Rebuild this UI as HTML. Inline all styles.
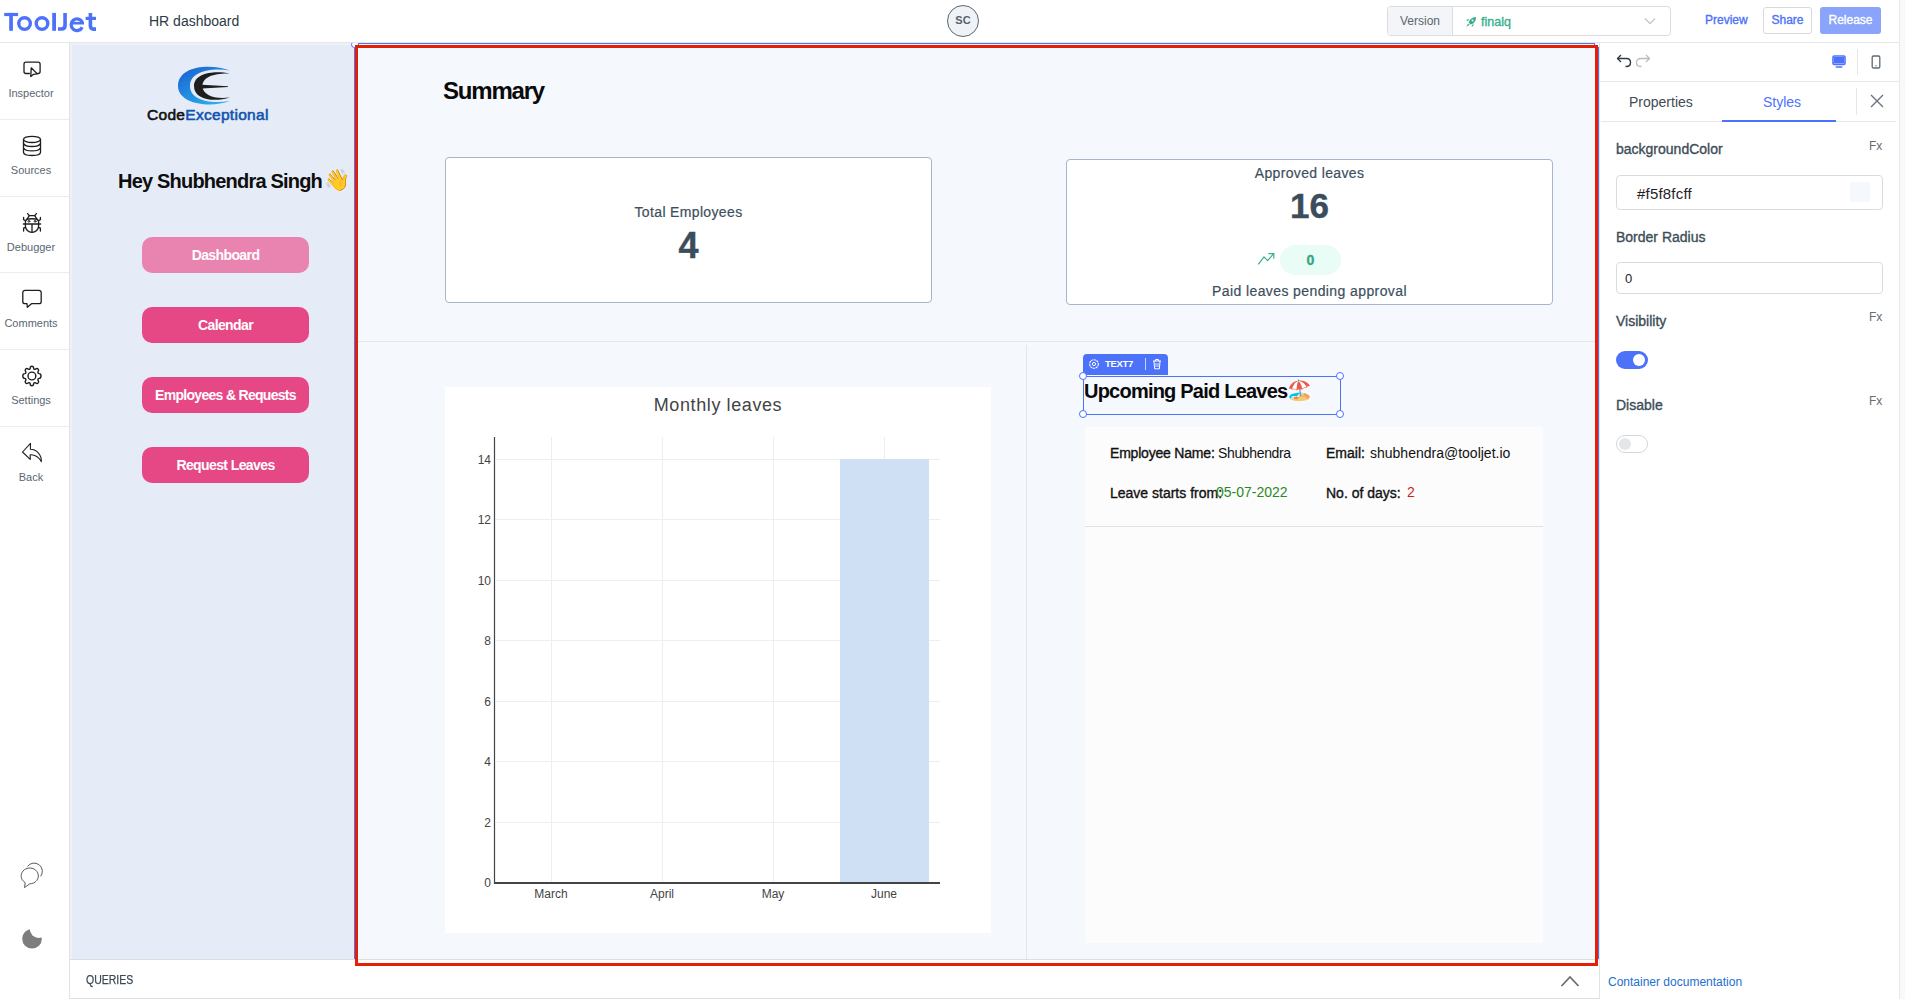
<!DOCTYPE html>
<html><head><meta charset="utf-8">
<style>
*{box-sizing:border-box;margin:0;padding:0}
html,body{width:1905px;height:999px;overflow:hidden;background:#fff;font-family:"Liberation Sans",sans-serif;position:relative}
.a{position:absolute}
.t{position:absolute;white-space:nowrap;line-height:1}
</style></head><body>

<!-- HEADER -->
<div class="a" style="left:0;top:0;width:1905px;height:42px;background:#fff"></div>
<div class="a" style="left:0;top:42px;width:1899px;height:1px;background:#e4e6e8"></div>
<svg class="a" style="left:0;top:5px" width="100" height="32" viewBox="0 5 100 32"><g fill="#4d72fa"><rect x="4.2" y="12.9" width="13.9" height="3.2"/><rect x="9.2" y="12.9" width="3.7" height="17.9"/><rect x="52.2" y="12.9" width="3.8" height="17.9"/><rect x="85.6" y="16.8" width="10.4" height="3.2"/></g><g fill="none" stroke="#4d72fa"><circle cx="24.55" cy="23.55" r="5.8" stroke-width="3.4"/><circle cx="42" cy="23.55" r="5.8" stroke-width="3.4"/><path d="M65.05 12.9 V25.3 Q65.05 29.05 61.3 29.05 H58" stroke-width="3.6"/><path d="M90.4 12.9 V25.8 Q90.4 29.1 93.7 29.1 H96" stroke-width="3.6"/><path d="M82.2 27.2 A5.8 5.8 0 1 1 82.3 22.5" stroke-width="3.3"/></g><rect x="70.5" y="21.9" width="13.5" height="2.6" fill="#4d72fa"/></svg>
<div class="t" style="left:149px;top:14px;font-size:14px;color:#2c3a45">HR dashboard</div>
<div class="a" style="left:947px;top:5px;width:32px;height:32px;border-radius:50%;border:1px solid #5b6770;background:#eff2f6"></div>
<div class="t" style="left:947px;top:15px;width:32px;text-align:center;font-size:11px;font-weight:bold;color:#56626c">SC</div>

<div class="a" style="left:1387px;top:6px;width:284px;height:30px;border:1px solid #dadcdf;border-radius:4px;background:#fff;overflow:hidden">
  <div class="a" style="left:0;top:0;width:65px;height:28px;background:#f3f5f8;border-right:1px solid #dadcdf"></div>
</div>
<div class="t" style="left:1400px;top:15px;font-size:12px;color:#5b6670">Version</div>
<svg class="a" style="left:1460px;top:10px" width="20" height="22" viewBox="1460 10 20 22"><g fill="#34ad88"><path d="M1475.9 16.9 C1474 16.9 1471.5 18 1469.8 19.9 L1468.6 22.6 L1470.6 24.6 L1473.3 23.4 C1475.2 21.7 1476.2 19.2 1475.9 16.9 Z"/><path d="M1468.9 18.8 L1466.8 19.7 L1466.6 21.2 L1468.4 20.6 Z"/><path d="M1473.9 24.1 L1473 26.2 L1471.4 26.5 L1472.3 24.7 Z"/><path d="M1468.3 23.4 L1466.1 26.9 L1469.7 24.8 Z"/></g><circle cx="1472.6" cy="20.5" r="1.05" fill="#fff"/></svg>
<div class="t" style="left:1481px;top:16px;font-size:12.5px;-webkit-text-stroke:0.35px currentColor;color:#36af8b">finalq</div>
<svg class="a" style="left:1644px;top:17px" width="12" height="8" viewBox="0 0 12 8"><path d="M1 1.5 L6 6.5 L11 1.5" fill="none" stroke="#c3c7cb" stroke-width="1.3"/></svg>

<div class="t" style="left:1705px;top:14px;font-size:12px;-webkit-text-stroke:0.35px currentColor;color:#4d72fa">Preview</div>
<div class="a" style="left:1763px;top:7px;width:49px;height:27px;border:1px solid #d6d9dd;border-radius:3px;background:#fff"></div>
<div class="t" style="left:1763px;top:14px;width:49px;text-align:center;font-size:12px;-webkit-text-stroke:0.35px currentColor;color:#4d72fa">Share</div>
<div class="a" style="left:1820px;top:7px;width:61px;height:27px;border-radius:3px;background:#8aa4fb"></div>
<div class="t" style="left:1820px;top:14px;width:61px;text-align:center;font-size:12px;-webkit-text-stroke:0.35px currentColor;color:#fff">Release</div>

<!-- right scroll edge -->
<div class="a" style="left:1899px;top:0;width:1px;height:999px;background:#e8e9eb"></div>
<div class="a" style="left:1900px;top:0;width:5px;height:999px;background:#f9f9f9"></div>

<!-- LEFT SIDEBAR -->
<div class="a" style="left:69px;top:43px;width:1px;height:956px;background:#e1e3e5"></div>
<div class="a" style="left:0;top:119px;width:69px;height:1px;background:#ececee"></div>
<div class="a" style="left:0;top:196px;width:69px;height:1px;background:#ececee"></div>
<div class="a" style="left:0;top:272px;width:69px;height:1px;background:#ececee"></div>
<div class="a" style="left:0;top:349px;width:69px;height:1px;background:#ececee"></div>
<div class="a" style="left:0;top:426px;width:69px;height:1px;background:#ececee"></div>

<svg class="a" style="left:0;top:0" width="70" height="480" viewBox="0 0 70 480"><g fill="none" stroke="#1e1e1e" stroke-width="1.3" stroke-linejoin="round" stroke-linecap="round">
<path d="M29.4 73.5 H26 a2 2 0 0 1 -2 -2 V64.2 a2 2 0 0 1 2 -2 H38.1 a2 2 0 0 1 2 2 V71.5 a2 2 0 0 1 -2 2 H37.6"/>
<path d="M31.2 67.8 L37.3 73.9 L33.6 74.3 L30.8 76.6 Z"/>
<ellipse cx="32" cy="139.4" rx="8.5" ry="3.1"/>
<path d="M23.5 139.4 V152.3 C23.5 154.2 27.3 155.5 32 155.5 C36.7 155.5 40.5 154.2 40.5 152.3 V139.4"/>
<path d="M23.5 143.6 C24.5 145.5 28 146.5 32 146.5 C36 146.5 39.5 145.5 40.5 143.6 M23.5 148 C24.5 149.9 28 150.9 32 150.9 C36 150.9 39.5 149.9 40.5 148"/>
<path d="M27.6 213.6 L29.3 215.6 M36.4 213.6 L34.7 215.6"/>
<path d="M29.3 215.6 H34.7 L38.6 221.5 V226 C38.6 229.5 35.5 232.4 32 232.4 C28.5 232.4 25.4 229.5 25.4 226 V221.5 Z"/>
<path d="M23.4 224 H40.6 M32 224 V232.2 M26.3 219.5 C28 218.5 36 218.5 37.7 219.5"/>
<path d="M25.5 220.8 L23.6 219.6 V217.3 M38.5 220.8 L40.4 219.6 V217.3 M25.5 227.3 L23.6 228.2 V231 M38.5 227.3 L40.4 228.2 V231"/>
<circle cx="28.9" cy="221.3" r="0.9" stroke-width="1"/><circle cx="35.1" cy="221.3" r="0.9" stroke-width="1"/>
<path d="M25 290.3 H39 a2.2 2.2 0 0 1 2.2 2.2 V301.5 a2.2 2.2 0 0 1 -2.2 2.2 H31.5 L27.3 307.3 L27 303.7 H25 a2.2 2.2 0 0 1 -2.2 -2.2 V292.5 a2.2 2.2 0 0 1 2.2 -2.2 Z"/>
<circle cx="31.9" cy="376" r="3.9" stroke-width="1.4"/>
<path d="M31.9 366.2 C33.2 366.2 33.6 366.9 33.6 368.2 C33.6 369 34.5 369.6 35.3 369.3 C36.3 368.5 37.3 368.3 38.1 369 C38.9 369.8 38.8 370.8 38 371.7 C37.6 372.5 38.1 373.5 39.1 373.6 C40.4 373.6 41 374.5 41 376 C41 377.5 40.4 378.4 39.1 378.4 C38.1 378.5 37.6 379.5 38 380.3 C38.8 381.2 38.9 382.2 38.1 383 C37.3 383.7 36.3 383.5 35.3 382.7 C34.5 382.4 33.6 383 33.6 383.8 C33.6 385.1 33.2 385.8 31.9 385.8 C30.6 385.8 30.2 385.1 30.2 383.8 C30.2 383 29.3 382.4 28.5 382.7 C27.5 383.5 26.5 383.7 25.7 383 C24.9 382.2 25 381.2 25.8 380.3 C26.2 379.5 25.7 378.5 24.7 378.4 C23.4 378.4 22.8 377.5 22.8 376 C22.8 374.5 23.4 373.6 24.7 373.6 C25.7 373.5 26.2 372.5 25.8 371.7 C25 370.8 24.9 369.8 25.7 369 C26.5 368.3 27.5 368.5 28.5 369.3 C29.3 369.6 30.2 369 30.2 368.2 C30.2 366.9 30.6 366.2 31.9 366.2 Z" stroke-width="1.4"/>
<path d="M30.5 443.4 L22.5 452 L30.2 459.3 V454.8 C35 454.5 39 457.5 41.4 461.6 C41.6 455 37 449.6 30.4 449.3 Z" stroke-width="1.1"/>
</g></svg>
<div class="t" style="left:0;top:88px;width:62px;text-align:center;font-size:11px;color:#5a6772">Inspector</div>

<div class="t" style="left:0;top:165px;width:62px;text-align:center;font-size:11px;color:#5a6772">Sources</div>

<div class="t" style="left:0;top:242px;width:62px;text-align:center;font-size:11px;color:#5a6772">Debugger</div>

<div class="t" style="left:0;top:318px;width:62px;text-align:center;font-size:11px;color:#5a6772">Comments</div>

<div class="t" style="left:0;top:395px;width:62px;text-align:center;font-size:11px;color:#5a6772">Settings</div>

<div class="t" style="left:0;top:472px;width:62px;text-align:center;font-size:11px;color:#5a6772">Back</div>

<svg class="a" style="left:0;top:855px" width="70" height="40" viewBox="0 855 70 40"><g fill="none" stroke="#4a4a4a" stroke-width="0.9" stroke-linejoin="round"><path d="M29.8 883.8 A8.6 7.9 0 1 0 25.2 882.6 L24.5 887.6 Z"/><path d="M27.5 866.4 A7.9 7.9 0 1 1 40.7 876.3"/></g></svg>
<svg class="a" style="left:0;top:900px" width="70" height="60" viewBox="0 900 70 60"><defs><mask id="mm"><rect x="0" y="900" width="70" height="60" fill="#fff"/><circle cx="38.8" cy="929" r="9" fill="#000"/></mask></defs><circle cx="32" cy="938.8" r="9.8" fill="#7d7d7d" mask="url(#mm)"/></svg>

<!-- APP LEFT SIDEBAR -->
<div class="a" style="left:70px;top:43px;width:284px;height:916px;background:#eef1f6"></div><div class="a" style="left:72px;top:45px;width:282px;height:914px;background:#e5ecf7"></div>

<!-- logo -->
<svg class="a" style="left:170px;top:60px" width="70" height="50" viewBox="170 60 70 50">
<defs><linearGradient id="bg1" x1="0" y1="0" x2="0.8" y2="1"><stop offset="0" stop-color="#1a5fcf"/><stop offset="1" stop-color="#2bb0f2"/></linearGradient></defs>
<path d="M230 70.5 C212 63.5 178 65 178 86 C178 104 210 108.5 230 101 C206 104.5 190 98.5 190 86 C190 72 210 67.5 230 70.5 Z" fill="url(#bg1)"/>
<path d="M230 73.5 C214 70 194 73 194 86 C194 100 214 102.5 230 97.5 C214 99.5 202.5 95 202.5 86 C202.5 77 214 73 230 73.5 Z" fill="#1e1e1e"/>
<path d="M202 84.8 L228 86.2 L228 86.9 L202 88.6 Z" fill="#1e1e1e"/>
</svg>
<div class="t" style="left:147px;top:107px;font-size:15.5px;-webkit-text-stroke:0.6px currentColor;letter-spacing:0.3px;color:#111">Code<span style="color:#1254b0">Exceptional</span></div>

<div class="t" style="left:118px;top:171px;font-size:20px;font-weight:bold;letter-spacing:-0.8px;color:#0e0e0e">Hey Shubhendra Singh</div>
<div class="t" style="left:324px;top:169px;font-size:21px">👋</div>

<div class="a" style="left:142px;top:237px;width:167px;height:36px;border-radius:10px;background:#e984b0"></div>
<div class="t" style="left:142px;top:248px;width:167px;text-align:center;font-size:14px;font-weight:bold;letter-spacing:-0.6px;color:#fff">Dashboard</div>
<div class="a" style="left:142px;top:307px;width:167px;height:36px;border-radius:10px;background:#e64886"></div>
<div class="t" style="left:142px;top:318px;width:167px;text-align:center;font-size:14px;font-weight:bold;letter-spacing:-0.6px;color:#fff">Calendar</div>
<div class="a" style="left:142px;top:377px;width:167px;height:36px;border-radius:10px;background:#e64886"></div>
<div class="t" style="left:142px;top:388px;width:167px;text-align:center;font-size:14px;font-weight:bold;letter-spacing:-0.7px;color:#fff">Employees &amp; Requests</div>
<div class="a" style="left:142px;top:447px;width:167px;height:36px;border-radius:10px;background:#e64886"></div>
<div class="t" style="left:142px;top:458px;width:167px;text-align:center;font-size:14px;font-weight:bold;letter-spacing:-0.6px;color:#fff">Request Leaves</div>

<!-- CANVAS -->
<div class="a" style="left:354px;top:43px;width:1245px;height:916px;background:#f5f8fc"></div>

<!-- QUERIES -->
<div class="a" style="left:70px;top:959px;width:1530px;height:40px;background:#fff;border-top:1px solid #dcdee0;border-bottom:1px solid #dcdee0;border-right:1px solid #dcdee0"></div>
<div class="t" style="left:86px;top:974px;font-size:12.5px;-webkit-text-stroke:0.25px currentColor;color:#3a4a56;transform:scaleX(0.84);transform-origin:0 0">QUERIES</div>
<svg class="a" style="left:1560px;top:974px" width="20" height="14" viewBox="0 0 20 14"><path d="M1.5 12 L10 3 L18.5 12" fill="none" stroke="#6a6e72" stroke-width="1.8"/></svg>

<!-- RIGHT PANEL -->
<div class="a" style="left:1599px;top:43px;width:1px;height:956px;background:#e1e3e5"></div>
<div class="a" style="left:1600px;top:81px;width:299px;height:1px;background:#e6e8ea"></div>

<svg class="a" style="left:1616px;top:54px" width="16" height="14" viewBox="0 0 16 14"><path d="M5 1 L1.5 4.5 L5 8" fill="none" stroke="#2f3a42" stroke-width="1.4" stroke-linejoin="round"/><path d="M1.5 4.5 H10.5 C13 4.5 14.5 6.3 14.5 8.5 C14.5 10.7 13 12.5 10.5 12.5 H9.5" fill="none" stroke="#2f3a42" stroke-width="1.4"/></svg>
<svg class="a" style="left:1635px;top:54px" width="16" height="14" viewBox="0 0 16 14"><path d="M11 1 L14.5 4.5 L11 8" fill="none" stroke="#b9bdc1" stroke-width="1.3" stroke-linejoin="round"/><path d="M14.5 4.5 H5.5 C3 4.5 1.5 6.3 1.5 8.5 C1.5 10.7 3 12.5 5.5 12.5 H6.5" fill="none" stroke="#b9bdc1" stroke-width="1.3"/></svg>
<svg class="a" style="left:1832px;top:55px" width="14" height="14" viewBox="0 0 14 14"><rect x="1" y="1" width="12" height="8.5" rx="1.2" fill="none" stroke="#4d72fa" stroke-width="1.6"/><rect x="2" y="2" width="10" height="6.5" fill="#4d72fa"/><rect x="3.5" y="11.2" width="7" height="1.6" rx="0.8" fill="#4d72fa"/></svg>
<div class="a" style="left:1857px;top:49px;width:1px;height:26px;background:#e3e6ea"></div>
<svg class="a" style="left:1871px;top:55px" width="10" height="14" viewBox="0 0 10 14"><rect x="1.2" y="1" width="7.6" height="12" rx="1.3" fill="none" stroke="#5f6a73" stroke-width="1.3"/><circle cx="5" cy="10.7" r="0.7" fill="#5f6a73"/></svg>

<div class="t" style="left:1629px;top:95px;font-size:14px;color:#3e4b55">Properties</div>
<div class="t" style="left:1763px;top:95px;font-size:14px;color:#4d72fa">Styles</div>
<div class="a" style="left:1856px;top:88px;width:1px;height:27px;background:#e3e6ea"></div>
<svg class="a" style="left:1870px;top:94px" width="14" height="14" viewBox="0 0 14 14"><path d="M1 1 L13 13 M13 1 L1 13" stroke="#6a737b" stroke-width="1.4"/></svg>
<div class="a" style="left:1601px;top:121px;width:295px;height:1px;background:#e6e8ea"></div>
<div class="a" style="left:1722px;top:120px;width:114px;height:2px;background:#4d72fa"></div>

<div class="t" style="left:1616px;top:142px;font-size:14px;-webkit-text-stroke:0.35px currentColor;color:#3d4d58">backgroundColor</div>
<div class="t" style="left:1869px;top:140px;font-size:12px;color:#666d73">Fx</div>
<div class="a" style="left:1616px;top:175px;width:267px;height:35px;border:1px solid #d9dcdf;border-radius:4px;background:#fff"></div>
<div class="t" style="left:1637px;top:186px;font-size:15px;letter-spacing:0.2px;color:#1f2328">#f5f8fcff</div>
<div class="a" style="left:1850px;top:182px;width:20px;height:20px;background:#f5f8fc"></div>

<div class="t" style="left:1616px;top:230px;font-size:14px;-webkit-text-stroke:0.35px currentColor;color:#3d4d58">Border Radius</div>
<div class="a" style="left:1616px;top:262px;width:267px;height:32px;border:1px solid #d9dcdf;border-radius:4px;background:#fff"></div>
<div class="t" style="left:1625px;top:272px;font-size:13px;color:#1f2328">0</div>

<div class="t" style="left:1616px;top:314px;font-size:14px;-webkit-text-stroke:0.35px currentColor;color:#3d4d58">Visibility</div>
<div class="t" style="left:1869px;top:311px;font-size:12px;color:#666d73">Fx</div>
<div class="a" style="left:1616px;top:351px;width:32px;height:18px;border-radius:9px;background:#4d72fa"></div>
<div class="a" style="left:1633px;top:354px;width:12px;height:12px;border-radius:50%;background:#fff"></div>

<div class="t" style="left:1616px;top:398px;font-size:14px;-webkit-text-stroke:0.35px currentColor;color:#3d4d58">Disable</div>
<div class="t" style="left:1869px;top:395px;font-size:12px;color:#666d73">Fx</div>
<div class="a" style="left:1616px;top:435px;width:32px;height:18px;border-radius:9px;background:#fff;border:1px solid #d3d6d9"></div>
<div class="a" style="left:1619px;top:438px;width:12px;height:12px;border-radius:50%;background:#e5e6e8"></div>

<div class="t" style="left:1608px;top:976px;font-size:12px;color:#1e6fce">Container documentation</div>

<!-- canvas separators -->
<div class="a" style="left:358px;top:341px;width:1237px;height:1px;background:#e4e6ea"></div>
<div class="a" style="left:1026px;top:345px;width:1px;height:614px;background:#e4e6ea"></div>

<div class="t" style="left:443px;top:79px;font-size:24px;font-weight:bold;letter-spacing:-1.2px;color:#0a0a0a">Summary</div>

<!-- card1 -->
<div class="a" style="left:445px;top:157px;width:487px;height:146px;border:1px solid #a7b6cd;border-radius:4px;background:#fff"></div>
<div class="t" style="left:445px;top:205px;width:487px;text-align:center;font-size:14px;letter-spacing:0.35px;-webkit-text-stroke:0.2px currentColor;color:#3d4f5e">Total Employees</div>
<div class="t" style="left:445px;top:228px;width:487px;text-align:center;font-size:36px;font-weight:bold;-webkit-text-stroke:0.4px currentColor;color:#3b4d5c">4</div>

<!-- card2 -->
<div class="a" style="left:1066px;top:159px;width:487px;height:146px;border:1px solid #a7b6cd;border-radius:4px;background:#fff"></div>
<div class="t" style="left:1066px;top:166px;width:487px;text-align:center;font-size:14px;letter-spacing:0.35px;-webkit-text-stroke:0.2px currentColor;color:#3d4f5e">Approved leaves</div>
<div class="t" style="left:1066px;top:188px;width:487px;text-align:center;font-size:35px;font-weight:bold;-webkit-text-stroke:0.4px currentColor;color:#3b4d5c">16</div>
<svg class="a" style="left:1250px;top:245px" width="30" height="25" viewBox="1250 245 30 25"><path d="M1258.3 264.4 L1264 256.8 L1267.6 260.6 L1273.4 253.9 M1268.4 253.6 H1273.8 V258.8" fill="none" stroke="#36af8b" stroke-width="1.15"/></svg>
<div class="a" style="left:1280px;top:245px;width:61px;height:30px;border-radius:15px;background:#e9fcf5"></div>
<div class="t" style="left:1280px;top:253px;width:61px;text-align:center;font-size:14px;font-weight:bold;-webkit-text-stroke:0.3px currentColor;color:#2fa983">0</div>
<div class="t" style="left:1066px;top:284px;width:487px;text-align:center;font-size:14px;letter-spacing:0.4px;-webkit-text-stroke:0.2px currentColor;color:#3d4f5e">Paid leaves pending approval</div>

<!-- chart -->
<div class="a" style="left:445px;top:387px;width:546px;height:546px;background:#fff"></div>
<div class="t" style="left:445px;top:396px;width:546px;text-align:center;font-size:18px;letter-spacing:0.6px;color:#444">Monthly leaves</div>
<svg class="a" style="left:445px;top:387px" width="546" height="546" viewBox="445 387 546 546">
<g stroke="#eeeeee" stroke-width="1">
<line x1="496" y1="459.5" x2="940" y2="459.5"/>
<line x1="496" y1="519.5" x2="940" y2="519.5"/>
<line x1="496" y1="580.5" x2="940" y2="580.5"/>
<line x1="496" y1="640.5" x2="940" y2="640.5"/>
<line x1="496" y1="701.5" x2="940" y2="701.5"/>
<line x1="496" y1="761.5" x2="940" y2="761.5"/>
<line x1="496" y1="822.5" x2="940" y2="822.5"/>
<line x1="551.5" y1="437" x2="551.5" y2="882"/>
<line x1="662.5" y1="437" x2="662.5" y2="882"/>
<line x1="773.5" y1="437" x2="773.5" y2="882"/>
<line x1="884.5" y1="437" x2="884.5" y2="882"/>
</g>
<rect x="840" y="459" width="89" height="424" fill="#cfe0f5"/>
<line x1="494.5" y1="437" x2="494.5" y2="884" stroke="#444" stroke-width="1.2"/>
<line x1="494" y1="883" x2="940" y2="883" stroke="#444" stroke-width="2"/>
<g font-family="Liberation Sans" font-size="12" fill="#444" text-anchor="end">
<text x="491" y="464">14</text><text x="491" y="524">12</text><text x="491" y="585">10</text><text x="491" y="645">8</text><text x="491" y="706">6</text><text x="491" y="766">4</text><text x="491" y="827">2</text><text x="491" y="887">0</text>
</g>
<g font-family="Liberation Sans" font-size="12" fill="#444" text-anchor="middle">
<text x="551" y="898">March</text><text x="662" y="898">April</text><text x="773" y="898">May</text><text x="884" y="898">June</text>
</g>
</svg>

<!-- listview -->
<div class="a" style="left:1085px;top:427px;width:458px;height:516px;background:#fcfcfc"></div>
<div class="a" style="left:1085px;top:526px;width:458px;height:1px;background:#dfe1e3"></div>
<div class="t" style="left:1110px;top:446px;font-size:14px;-webkit-text-stroke:0.35px currentColor;letter-spacing:-0.2px;color:#111">Employee Name:</div>
<div class="t" style="left:1218px;top:446px;font-size:14px;letter-spacing:-0.35px;color:#111">Shubhendra</div>
<div class="t" style="left:1326px;top:446px;font-size:14px;-webkit-text-stroke:0.35px currentColor;color:#111">Email:</div>
<div class="t" style="left:1370px;top:446px;font-size:14px;color:#111">shubhendra@tooljet.io</div>
<div class="t" style="left:1110px;top:486px;font-size:14px;-webkit-text-stroke:0.35px currentColor;color:#111">Leave starts from:</div>
<div class="t" style="left:1216px;top:485px;font-size:14px;color:#2a8a1f">05-07-2022</div>
<div class="t" style="left:1326px;top:486px;font-size:14px;-webkit-text-stroke:0.35px currentColor;color:#111">No. of days:</div>
<div class="t" style="left:1407px;top:485px;font-size:14px;color:#d21c1c">2</div>

<!-- selected text7 -->
<div class="t" style="left:1084px;top:381px;font-size:20px;font-weight:bold;letter-spacing:-0.78px;color:#0a0a0a">Upcoming Paid Leaves</div>
<div class="t" style="left:1287px;top:380px;font-size:20px">🏖️</div>
<div class="a" style="left:1083px;top:354px;width:85px;height:21px;border-radius:4px 4px 0 0;background:#4d72fa"></div>
<svg class="a" style="left:1088px;top:358px" width="12" height="12" viewBox="0 0 12 12"><circle cx="6" cy="6" r="4.3" fill="none" stroke="#fff" stroke-width="1.1" stroke-dasharray="2.2 0.6"/><circle cx="6" cy="6" r="1.6" fill="none" stroke="#fff" stroke-width="1"/></svg>
<div class="t" style="left:1105px;top:359px;font-size:9.5px;font-weight:bold;color:#fff;letter-spacing:-0.3px">TEXT7</div>
<div class="a" style="left:1145px;top:358px;width:1px;height:12px;background:#c8d4fd"></div>
<svg class="a" style="left:1152px;top:358px" width="10" height="12" viewBox="0 0 10 12"><path d="M1 3 H9 M3.5 3 V1.5 H6.5 V3 M2 3 L2.6 10.8 H7.4 L8 3" fill="none" stroke="#fff" stroke-width="1"/><path d="M4 5 V9 M6 5 V9" stroke="#fff" stroke-width="0.8"/></svg>
<div class="a" style="left:1082.5px;top:375.5px;width:258px;height:39px;border:1.2px solid #4d72fa"></div>
<div class="a" style="left:1079px;top:372px;width:8px;height:8px;border-radius:50%;border:1px solid #4d72fa;background:#fff"></div>
<div class="a" style="left:1336px;top:372px;width:8px;height:8px;border-radius:50%;border:1px solid #4d72fa;background:#fff"></div>
<div class="a" style="left:1079px;top:410px;width:8px;height:8px;border-radius:50%;border:1px solid #4d72fa;background:#fff"></div>
<div class="a" style="left:1336px;top:410px;width:8px;height:8px;border-radius:50%;border:1px solid #4d72fa;background:#fff"></div>

<!-- canvas frame -->
<div class="a" style="left:358px;top:43px;width:1237px;height:1px;background:#4d72fa"></div><div class="a" style="left:358px;top:43px;width:1px;height:3px;background:#4d72fa"></div>
<div class="a" style="left:354px;top:43px;width:1px;height:916px;background:#4d72fa"></div>
<div class="a" style="left:1598px;top:47px;width:1px;height:912px;background:#4d72fa"></div><div class="a" style="left:1594px;top:43px;width:1px;height:3px;background:#4d72fa"></div>
<div class="a" style="left:355px;top:45px;width:243px;height:921px;border:3px solid #e51f05;width:1243px"></div>
<div class="a" style="left:351px;top:41px;width:7px;height:7px;border-radius:50%;border:1px solid #4d72fa;background:#fff;clip-path:inset(2px 3px 0 0)"></div>

</body></html>
